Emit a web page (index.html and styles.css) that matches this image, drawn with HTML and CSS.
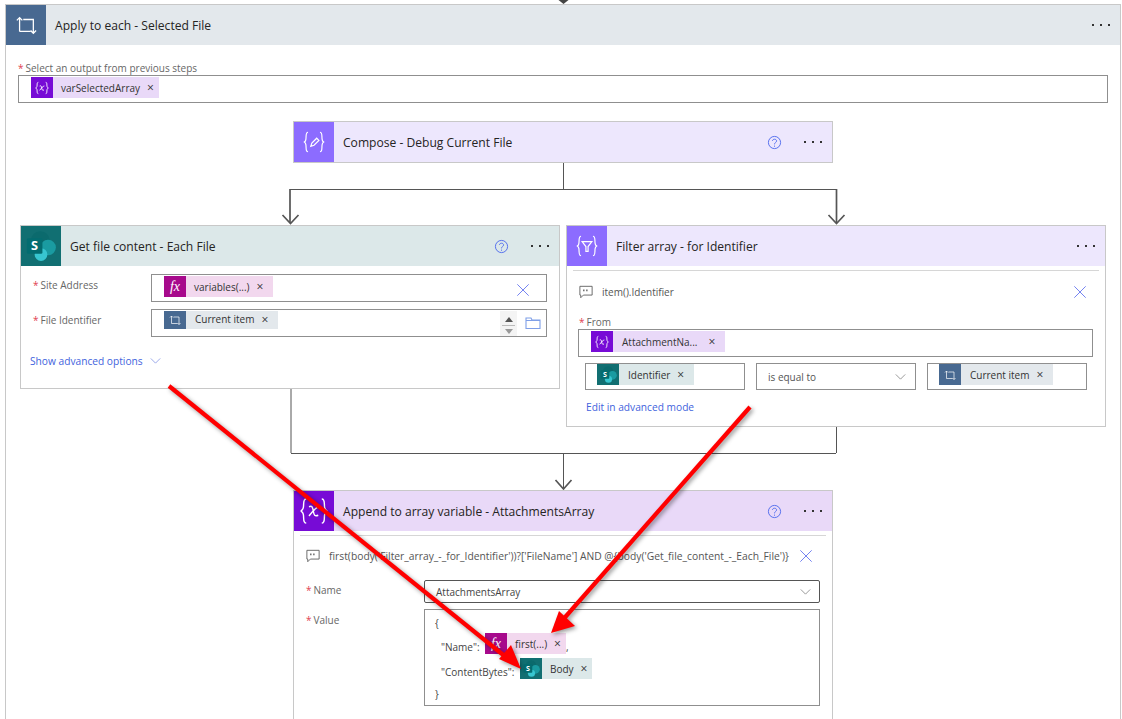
FILE: index.html
```html
<!DOCTYPE html>
<html lang="en">
<head>
<meta charset="utf-8">
<title>Flow</title>
<link rel="stylesheet" href="styles.css">
</head>
<body>
<svg class="defs" aria-hidden="true">
  <symbol id="i-loop" viewBox="0 0 24 24"><path d="M5 19V4M2 7l3-3 3 3M5 19H17M9 6H20V21M17 18l3 3 3-3" fill="none" stroke="currentColor" stroke-width="1.400"/></symbol>
  <symbol id="i-var" viewBox="0 0 24 24"><path d="M6.500 3.500C4 3.500 5 7 4.500 9.500 4.200 11 3 12 2.500 12c.5 0 1.700 1 2 2.500C5 17 4 20.500 6.500 20.500M17.500 3.500C20 3.500 19 7 19.500 9.500c.3 1.500 1.500 2.500 2 2.500-.5 0-1.700 1-2 2.500-.5 2.500.5 6-2 6M8.500 9c2-1 2.500 0 3 3s1 4 3.500 3M15.500 9c-2 0-5 4-7 6.500" fill="none" stroke="currentColor"/></symbol>
  <symbol id="i-compose" viewBox="0 0 24 24"><path d="M6.500 3C4 3 5 7 4.500 9.500 4.200 11 3 12 2.500 12c.5 0 1.700 1 2 2.500C5 17 4 21 6.500 21M17.500 3C20 3 19 7 19.500 9.500c.3 1.500 1.500 2.500 2 2.500-.5 0-1.700 1-2 2.500-.5 2.500.5 6.500-2 6.500M9 16l1-3 4.500-4.500 2 2-4.500 4.500z" fill="none" stroke="currentColor" stroke-width="1.100"/></symbol>
  <symbol id="i-filter" viewBox="0 0 24 24"><path d="M6.500 3C4 3 5 7 4.500 9.500 4.200 11 3 12 2.500 12c.5 0 1.700 1 2 2.500C5 17 4 21 6.500 21M17.500 3C20 3 19 7 19.500 9.500c.3 1.500 1.500 2.500 2 2.500-.5 0-1.700 1-2 2.500-.5 2.500.5 6.500-2 6.500M7.500 8h9l-3.500 4.500V17h-2v-4.500z" fill="none" stroke="currentColor" stroke-width="1.100"/></symbol>
  <symbol id="i-sp" viewBox="0 0 24 24">
    <circle cx="11.500" cy="8" r="6.500" fill="#0b6a6d"/><circle cx="17" cy="13" r="5.500" fill="#1a9ba1"/><circle cx="12" cy="18" r="4.500" fill="#37c6d0"/>
    <rect x="2" y="6.500" width="11" height="11" rx="1" fill="#036c70"/>
    <text x="7.500" y="15" text-anchor="middle" class="sp-letter">S</text>
  </symbol>
  <symbol id="i-help" viewBox="0 0 16 16"><circle cx="8" cy="8" r="6.500" fill="none" stroke="currentColor"/><path d="M5.800 6.300C6 3.800 10.200 4 10.200 6.300c0 1.700-2.200 1.700-2.200 3.700M8 11.300v1.200" fill="none" stroke="currentColor"/></symbol>
  <symbol id="i-x" viewBox="0 0 16 16"><path d="M1.500 1.500l13 13M14.500 1.500l-13 13" fill="none" stroke="currentColor" stroke-width="1.100"/></symbol>
  <symbol id="i-dots" viewBox="0 0 20 4"><rect x="1" y="1" width="2" height="2"/><rect x="9" y="1" width="2" height="2"/><rect x="17" y="1" width="2" height="2"/></symbol>
  <symbol id="i-chev" viewBox="0 0 12 7"><path d="M.5.500 6 6 11.500.500" fill="none" stroke="currentColor"/></symbol>
  <symbol id="i-comment" viewBox="0 0 16 16"><path d="M1 1.500h14v10H5l-3 3v-3H1z" fill="none" stroke="currentColor"/><path d="M5.500 5v2M9 5v2" stroke="currentColor" stroke-width="1.500"/></symbol>
  <symbol id="i-folder" viewBox="0 0 16 14"><path d="M1 12.500V2h5l1 2h8v8.500zM1 4.500h14" fill="none" stroke="currentColor" stroke-width="1.100"/></symbol>
</svg>

<main class="canvas">
  <section class="card node-outer">
    <header class="head head-loop">
      <span class="tile tile-loop tile-wide"><svg class="ti-loop"><use href="#i-loop"/></svg></span>
      <h2 class="title">Apply to each - Selected File</h2>
      <svg class="dots"><use href="#i-dots"/></svg>
    </header>
    <div class="outer-body">
      <div class="top-label"><span class="req">*</span>Select an output from previous steps</div>
      <div class="box box-top">
        <span class="chip chip-var"><span class="chip-ic ic-var"><svg class="ti"><use href="#i-var"/></svg></span><span class="chip-tx">varSelectedArray</span><span class="chip-x chip-x-tight">×</span></span>
      </div>
    </div>
  </section>

  <svg class="wires" viewBox="0 0 1122 719" aria-hidden="true">
    <path class="w1" d="M563.500 0V3M563.500 162V189M290 189.500H837M291 388V453M836.500 427V453M291 453.500H836M563.500 453V488"/>
    <path class="w2" d="M290 189V223M836.500 189V223"/>
    <path class="w2" d="M282.500 215l8 8.500 8-8.500M828.500 215l8 8.500 8-8.500M555.500 480l8 9 8-9"/>
    <path class="wf" d="M558.500 0h10l-5 4z"/>
  </svg>

  <section class="card node-compose">
    <header class="head head-compose">
      <span class="tile tile-compose tile-wide"><svg class="ti-lg"><use href="#i-compose"/></svg></span>
      <h2 class="title">Compose - Debug Current File</h2>
      <svg class="help"><use href="#i-help"/></svg>
      <svg class="dots"><use href="#i-dots"/></svg>
    </header>
  </section>

  <section class="card node-get">
    <header class="head head-sp">
      <span class="tile tile-sp tile-wide"><svg class="ti-sp"><use href="#i-sp"/></svg></span>
      <h2 class="title">Get file content - Each File</h2>
      <svg class="help"><use href="#i-help"/></svg>
      <svg class="dots"><use href="#i-dots"/></svg>
    </header>
    <div class="get-body">
      <div class="field">
        <label class="flabel flabel-get"><span class="req">*</span>Site Address</label>
        <div class="box box-get">
          <span class="chip chip-fx"><span class="chip-ic ic-fx"><span class="fx">fx</span></span><span class="chip-tx">variables(...)</span><span class="chip-x">×</span></span>
          <svg class="x-ic x-get"><use href="#i-x"/></svg>
        </div>
      </div>
      <div class="field">
        <label class="flabel flabel-get"><span class="req">*</span>File Identifier</label>
        <div class="box box-get">
          <span class="chip chip-loop chip-short"><span class="chip-ic ic-loop"><svg class="ti ti-s"><use href="#i-loop"/></svg></span><span class="chip-tx">Current item</span><span class="chip-x">×</span></span>
          <span class="spin"><i class="up"></i><i class="sep"></i><i class="down"></i></span>
          <svg class="folder"><use href="#i-folder"/></svg>
        </div>
      </div>
      <a class="link link-adv">Show advanced options<svg class="chev chev-link"><use href="#i-chev"/></svg></a>
    </div>
  </section>

  <section class="card node-filter">
    <header class="head head-compose">
      <span class="tile tile-compose tile-wide"><svg class="ti-lg"><use href="#i-filter"/></svg></span>
      <h2 class="title">Filter array - for Identifier</h2>
      <svg class="dots"><use href="#i-dots"/></svg>
    </header>
    <div class="rule"></div>
    <div class="filter-body">
      <div class="note note-filter">
        <svg class="cmt"><use href="#i-comment"/></svg>
        <span class="note-tx note-grow">item().Identifier</span>
        <svg class="x-ic"><use href="#i-x"/></svg>
      </div>
      <div class="from-label"><span class="req">*</span>From</div>
      <div class="box box-from">
        <span class="chip chip-var"><span class="chip-ic ic-var"><svg class="ti"><use href="#i-var"/></svg></span><span class="chip-tx">AttachmentNa...</span><span class="chip-x chip-x-wide">×</span></span>
      </div>
      <div class="cond">
        <div class="box box-cond"><span class="chip chip-sp"><span class="chip-ic ic-sp"><svg class="ti ti-sp-s"><use href="#i-sp"/></svg></span><span class="chip-tx">Identifier</span><span class="chip-x">×</span></span></div>
        <div class="box box-cond box-sel"><span class="sel-tx">is equal to</span><svg class="chev"><use href="#i-chev"/></svg></div>
        <div class="box box-cond"><span class="chip chip-loop"><span class="chip-ic ic-loop"><svg class="ti ti-s"><use href="#i-loop"/></svg></span><span class="chip-tx">Current item</span><span class="chip-x">×</span></span></div>
      </div>
      <a class="link link-edit">Edit in advanced mode</a>
    </div>
  </section>

  <section class="card node-append">
    <header class="head head-var">
      <span class="tile tile-var tile-wide"><svg class="ti-xl"><use href="#i-var"/></svg></span>
      <h2 class="title">Append to array variable - AttachmentsArray</h2>
      <svg class="help"><use href="#i-help"/></svg>
      <svg class="dots"><use href="#i-dots"/></svg>
    </header>
    <div class="rule"></div>
    <div class="append-body">
      <div class="note note-append">
        <svg class="cmt"><use href="#i-comment"/></svg>
        <span class="note-tx note-long">first(body('Filter_array_-_for_Identifier'))?['FileName'] AND @{body('Get_file_content_-_Each_File')}</span>
        <svg class="x-ic"><use href="#i-x"/></svg>
      </div>
      <div class="field field-name">
        <label class="flabel flabel-app"><span class="req">*</span>Name</label>
        <div class="box box-name"><span class="name-tx">AttachmentsArray</span><svg class="chev"><use href="#i-chev"/></svg></div>
      </div>
      <div class="field field-value">
        <label class="flabel flabel-app flabel-val"><span class="req">*</span>Value</label>
        <div class="box box-value">
          <div class="line line-a">{</div>
          <div class="line line-b"><span class="code code-in">"Name":</span><span class="chip chip-fx chip-inline"><span class="chip-ic ic-fx"><span class="fx">fx</span></span><span class="chip-tx">first(...)</span><span class="chip-x chip-x-tight">×</span></span><span class="code">,</span></div>
          <div class="line line-c"><span class="code code-in">"ContentBytes":</span><span class="chip chip-sp chip-inline"><span class="chip-ic ic-sp"><svg class="ti ti-sp-s"><use href="#i-sp"/></svg></span><span class="chip-tx">Body</span><span class="chip-x chip-x-tight">×</span></span></div>
          <div class="line line-d">}</div>
        </div>
      </div>
    </div>
  </section>

  <svg class="arrows" viewBox="0 0 1122 719" aria-hidden="true">
    <path class="ar-line" d="M169 386 512 662"/>
    <path class="ar-head" d="M521 669 499 659 511 645z"/>
    <path class="ar-line" d="M750 407 560 623"/>
    <path class="ar-head" d="M551 633 559 611 575 626z"/>
  </svg>
</main>
</body>
</html>
```

FILE: styles.css
```css
* { box-sizing: border-box; }
html, body { margin: 0; padding: 0; background: #fff; }
body { font-family: "Open Sans", "Noto Sans", "Liberation Sans", sans-serif; color: #252423; }
.defs { display: none; }
.sp-letter { font: 700 9px "Open Sans", sans-serif; fill: #fff; }

.canvas { position: relative; width: 1122px; height: 719px; overflow: hidden; }
.card { position: absolute; background: #fff; border: 1px solid #c8c8c8; }
.node-outer { left: 5px; top: 4px; width: 1116px; height: 780px; }
.node-compose { left: 293px; top: 121px; width: 540px; height: 42px; }
.node-get { left: 20px; top: 225px; width: 540px; height: 164px; }
.node-filter { left: 566px; top: 225px; width: 540px; height: 202px; }
.node-append { left: 293px; top: 490px; width: 540px; height: 280px; }

.wires, .arrows { position: absolute; left: 0; top: 0; width: 1122px; height: 719px; pointer-events: none; }
.w1 { fill: none; stroke: #555; stroke-width: 1; }
.w2 { fill: none; stroke: #555; stroke-width: 1.700; }
.wf { fill: #444; }
.arrows { filter: drop-shadow(2px 2px 2px rgba(0,0,0,.4)); }
.ar-line { fill: none; stroke: #f00; stroke-width: 4.200; }
.ar-head { fill: #f00; }

.head { display: flex; align-items: center; height: 40px; padding-right: 9px; }
.head-loop { background: #e3e8ec; }
.head-compose { background: #ede7fd; }
.head-sp { background: #dce8e9; }
.head-var { background: #e9d9f8; }
.tile { display: flex; align-items: center; justify-content: center; height: 40px; flex: none; color: #fff; }
.tile-wide { width: 40px; margin-right: 9px; }
.tile-loop { background: #486991; }
.tile-compose { background: #8c6cff; }
.tile-sp { background: #116f72; }
.tile-var { background: #770bd6; }
.ti-lg { width: 26px; height: 26px; }
.ti-xl { width: 34px; height: 34px; stroke-width: 1; }
.ti-loop { width: 22px; height: 22px; }
.ti-sp { width: 34px; height: 34px; }
.title { flex: 1; margin: 0; font-size: 12.100px; font-weight: 400; color: #252423; white-space: nowrap; }
.help { width: 15px; height: 15px; color: #4f6bed; margin-right: 21px; flex: none; }
.dots { width: 20px; height: 4px; fill: #333; flex: none; }

.req { color: #e04050; margin-right: 2px; }
.outer-body { padding: 15px 12px 0 12px; }
.top-label { font-size: 10px; line-height: 14px; color: #666; padding-top: 1px; }
.box { border: 1px solid #8f8f8f; background: #fff; display: flex; align-items: flex-start; }
.box-top { height: 28px; padding: 1px 0 0 12px; width: 1090px; }

.chip { display: inline-flex; align-items: center; height: 21px; font-size: 10px; color: #333; flex: none; }
.chip-ic { display: flex; align-items: center; justify-content: center; width: 22px; height: 21px; color: #fff; margin-right: 8px; flex: none; }
.cond .chip-ic, .box-from .chip-ic, .chip-short .chip-ic { margin-right: 9px; }
.chip-tx { white-space: nowrap; }
.chip-x { font-size: 12px; line-height: 12px; margin-left: 7px; margin-right: 10px; }
.chip-x-tight { margin-right: 5px; }
.chip-x-wide { margin-left: 11px; }
.chip-var { background: #e9d9f8; }
.chip-fx { background: #f2d8ee; }
.chip-loop { background: #e3e8ec; }
.chip-sp { background: #dce8e9; }
.chip-short { height: 18px; align-items: flex-start; line-height: 16px; }
.chip-short .chip-ic { height: 18px; }
.chip-short .chip-x { line-height: 18px; }
.ic-var { background: #770bd6; }
.ic-fx { background: #a70a8c; }
.ic-loop { background: #486991; }
.ic-sp { background: #116f72; }
.ti { width: 16px; height: 16px; stroke-width: 1.300; }
.ti-s { width: 12px; height: 12px; }
.ti-sp-s { width: 19px; height: 19px; }
.fx { font: italic 400 14px "Liberation Serif", serif; color: #fff; }

.get-body { padding: 8px 12px 0 0; }
.field { display: flex; align-items: flex-start; margin-bottom: 7px; }
.flabel { flex: none; font-size: 10px; line-height: 14px; color: #666; }
.flabel-get { width: 130px; padding: 4px 0 0 12px; }
.box-get { position: relative; width: 396px; height: 28px; padding: 1px 12px 0 12px; }
.x-ic { width: 14px; height: 14px; color: #6f7ff0; flex: none; }
.x-get { position: absolute; left: 364px; top: 8px; }
.spin { position: absolute; left: 348px; top: 1px; width: 17px; height: 25px; background: #f4f4f4; display: flex; flex-direction: column; align-items: center; padding-top: 6px; }
.spin i { display: block; }
.up { border: 4px solid transparent; border-top: 0; border-bottom: 5px solid #555; }
.sep { width: 13px; height: 1px; background: #bbb; margin: 3px 0; }
.down { border: 4px solid transparent; border-bottom: 0; border-top: 5px solid #999; }
.folder { position: absolute; left: 373px; top: 6px; width: 16px; height: 14px; color: #7f9fe8; }
.link { display: flex; align-items: center; font-size: 10.200px; line-height: 16px; color: #3f63dd; }
.link-adv { margin: 16px 0 0 9px; }
.chev { width: 11px; height: 6px; color: #8a8a8a; flex: none; }
.chev-link { margin-left: 7px; color: #8c9be8; }

.rule { height: 1px; background: #d6d6d6; margin: 4px 6px 0; }
.filter-body { padding: 0 13px 0 11px; }
.note { display: flex; align-items: center; height: 20px; }
.note-filter { margin-top: 11px; padding: 0 5px 0 1px; }
.cmt { width: 14px; height: 14px; color: #5a5a5a; margin-right: 9px; flex: none; }
.note-tx { font-size: 10px; color: #555; white-space: nowrap; }
.note-grow { flex: 1; }
.from-label { font-size: 10px; line-height: 13px; color: #666; margin-top: 14px; padding-left: 1px; }
.box-from { height: 28px; padding: 1px 0 0 12px; width: 515px; }
.cond { display: flex; gap: 11px; padding: 6px 0 0 7px; }
.box-cond { width: 160px; height: 27px; padding: 0 0 0 11px; }
.box-sel { align-items: center; justify-content: space-between; padding-right: 9px; }
.sel-tx { font-size: 10px; color: #555; }
.link-edit { margin: 9px 0 0 8px; }

.append-body { padding: 0 12px 0 12px; }
.note-append { margin-top: 10px; padding-right: 7px; }
.note-long { flex: 1; font-size: 10.300px; letter-spacing: 0; }
.field-name { margin: 14px 0 6px; }
.field-value { margin: 0; }
.flabel-app { width: 118px; padding-top: 3px; }
.flabel-val { padding-top: 4px; }
.box-name { width: 396px; height: 23px; border: 1px solid #555; border-radius: 2px; align-items: center; justify-content: space-between; padding: 0 8px 0 11px; }
.name-tx { font-size: 10px; color: #444; }
.box-value { width: 396px; height: 97px; display: block; padding: 4px 0 0 10px; }
.line { display: flex; align-items: flex-start; font-size: 10px; color: #444; }
.line-a, .line-d { height: 19px; line-height: 18px; }
.line-b { height: 25px; margin-left: 6px; }
.line-c { height: 27px; margin-left: 6px; }
.code { line-height: 16px; padding-top: 6px; white-space: nowrap; }
.code-in { min-width: 44px; }
.line-c .code-in { min-width: 79px; }
.chip-inline { flex: none; }
```
